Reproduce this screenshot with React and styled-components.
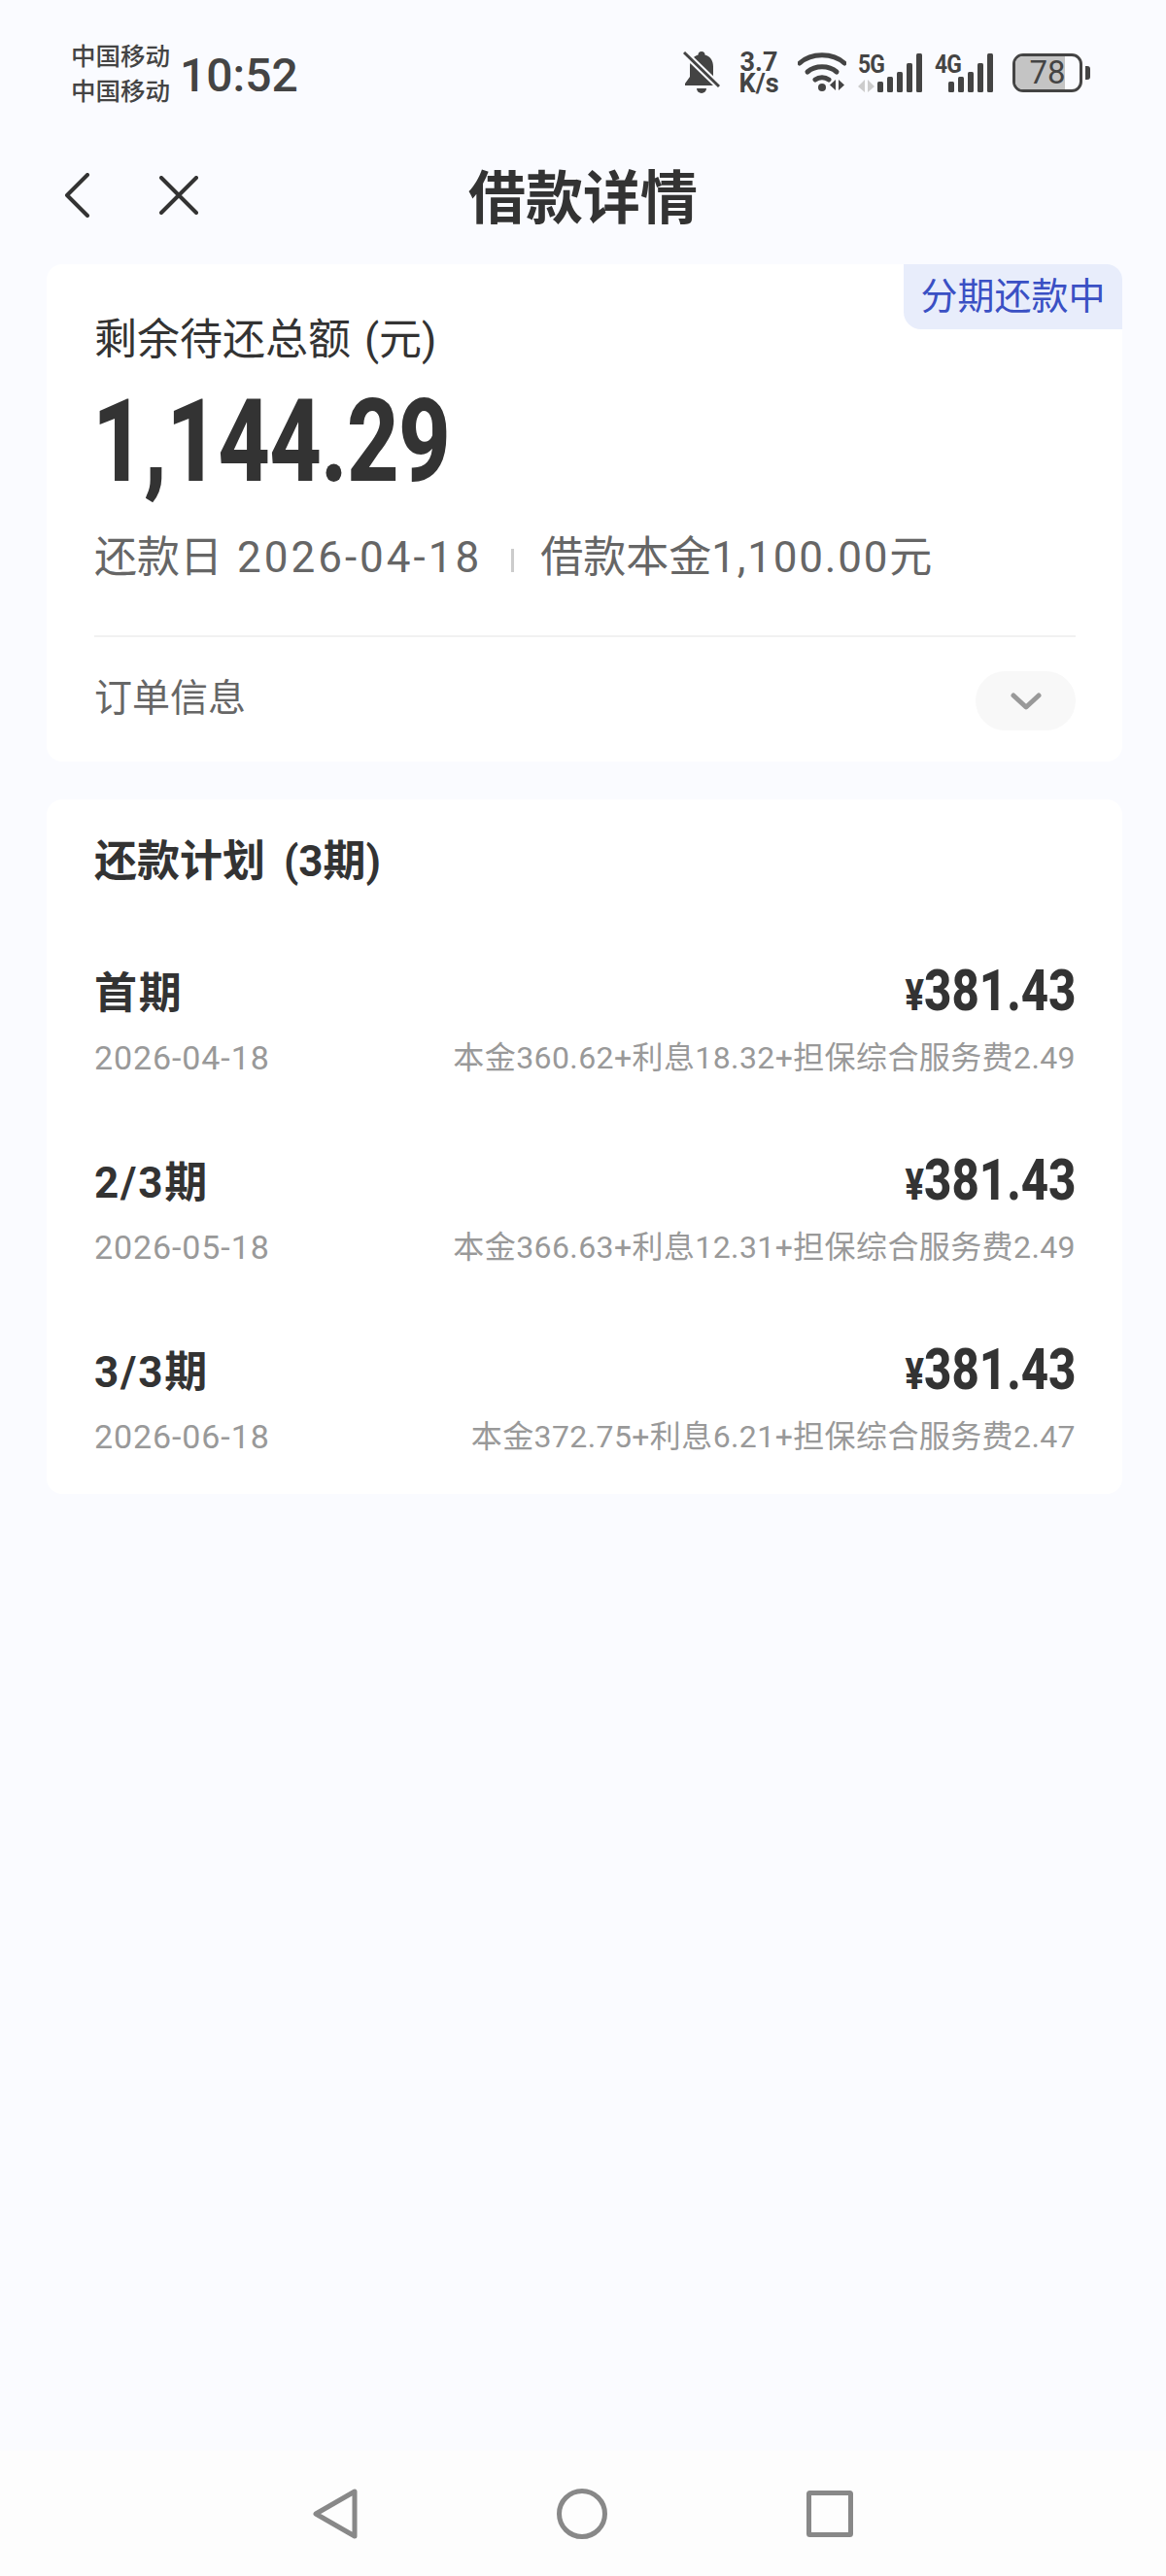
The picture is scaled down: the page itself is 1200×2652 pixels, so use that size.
import React from 'react';
import styled, { createGlobalStyle } from 'styled-components';

const plans = [
  { name: '首期', date: '2026-04-18', amount: '381.43', detail: '本金360.62+利息18.32+担保综合服务费2.49' },
  { name: '2/3期', date: '2026-05-18', amount: '381.43', detail: '本金366.63+利息12.31+担保综合服务费2.49' },
  { name: '3/3期', date: '2026-06-18', amount: '381.43', detail: '本金372.75+利息6.21+担保综合服务费2.47' },
];

const SignalBars = () => (
  <svg width="47" height="40" viewBox="0 0 47 40" fill="#444">
    <rect x="0" y="29" width="6" height="11" rx="1.5" />
    <rect x="10" y="24" width="6" height="16" rx="1.5" />
    <rect x="20" y="19" width="6" height="21" rx="1.5" />
    <rect x="30" y="10" width="6" height="30" rx="1.5" />
    <rect x="40" y="0" width="6" height="40" rx="1.5" />
  </svg>
);

const App = () => {
  return (
    <Page>
      <GlobalStyle />
      <StatusBar>
        <Carrier>
          <span>中国移动</span>
          <span>中国移动</span>
        </Carrier>
        <Clock>10:52</Clock>
        <StatusIcons>
          <svg width="38" height="44" viewBox="0 0 38 44" fill="#444">
            <path d="M19 0a3.500 3.500 0 0 1 3.500 3.500c6 1.500 8.500 6.500 8.500 12v10l5 7v2.500H2V33l5-7V15.500c0-5.500 3-10.500 8.500-12A3.500 3.500 0 0 1 19 0z" />
            <path d="M14 38h10a5 5 0 0 1-10 0z" />
            <path d="M1 1l36 35" stroke="#fafbff" strokeWidth="7" />
            <path d="M1 1l36 35" stroke="#444" strokeWidth="3" />
          </svg>
          <Speed>
            <span>3.7</span>
            <span>K/s</span>
          </Speed>
          <svg width="50" height="42" viewBox="0 0 50 42" fill="none" stroke="#444" strokeLinecap="round">
            <path d="M2 11C14 0 36 0 48 11" strokeWidth="5" />
            <path d="M10 20c8-7 22-7 30 0" strokeWidth="5" />
            <path d="M18 28c4-3 10-3 14 0" strokeWidth="5" />
            <circle cx="25" cy="36" r="4" fill="#444" stroke="none" />
            <path d="M39 28v11l-6-5.500zM42 28v11l6-5.500z" fill="#444" stroke="none" />
          </svg>
          <NetworkGroup>
            <Network $width={67}>
              <NetworkLabel>5G</NetworkLabel>
              <NetworkArrows width="17" height="13" viewBox="0 0 17 13" fill="#ccc">
                <path d="M7 0v13L0 7zM10 0v13l7-6z" />
              </NetworkArrows>
              <SignalBars />
            </Network>
            <Network $width={61}>
              <NetworkLabel>4G</NetworkLabel>
              <SignalBars />
            </Network>
          </NetworkGroup>
          <Battery>
            <BatteryBody>
              <BatteryFill />
              <BatteryText>78</BatteryText>
            </BatteryBody>
            <BatteryNub />
          </Battery>
        </StatusIcons>
      </StatusBar>

      <NavBar>
        <NavIcons>
          <svg width="26" height="46" viewBox="0 0 26 46" fill="none" stroke="#333" strokeWidth="4" strokeLinecap="round" strokeLinejoin="round">
            <path d="M24 2L3 23l21 21" />
          </svg>
          <svg width="40" height="40" viewBox="0 0 40 40" fill="none" stroke="#333" strokeWidth="4" strokeLinecap="round">
            <path d="M2 2l36 36M38 2L2 38" />
          </svg>
        </NavIcons>
        <Title>借款详情</Title>
      </NavBar>

      <Card>
        <Badge>分期还款中</Badge>
        <SummaryLabel>剩余待还总额 (元)</SummaryLabel>
        <Total>1,144.29</Total>
        <SummaryLine>
          <span>还款日<DateValue>2026-04-18</DateValue></span>
          <LineDivider />
          <span>借款本金<MoneyValue>1,100.00</MoneyValue>元</span>
        </SummaryLine>
        <OrderRow>
          <OrderLabel>订单信息</OrderLabel>
          <ExpandButton>
            <svg width="32" height="18" viewBox="0 0 32 18" fill="none" stroke="#999" strokeWidth="5" strokeLinecap="round" strokeLinejoin="round">
              <path d="M3 3l13 12L29 3" />
            </svg>
          </ExpandButton>
        </OrderRow>
      </Card>

      <PlanCard>
        <PlanTitle>还款计划 (3期)</PlanTitle>
        {plans.map((plan) => (
          <PlanRow key={plan.date}>
            <PlanTop>
              <PlanName>{plan.name}</PlanName>
              <PlanAmount><small>¥</small>{plan.amount}</PlanAmount>
            </PlanTop>
            <PlanBottom>
              <PlanDate>{plan.date}</PlanDate>
              <PlanDetail>{plan.detail}</PlanDetail>
            </PlanBottom>
          </PlanRow>
        ))}
      </PlanCard>

      <BottomNav>
        <svg width="46" height="52" viewBox="0 0 46 52" fill="none" stroke="#888" strokeWidth="5" strokeLinejoin="round">
          <path d="M43 3v46L3 26z" />
        </svg>
        <svg width="52" height="52" viewBox="0 0 52 52" fill="none" stroke="#888" strokeWidth="5">
          <circle cx="26" cy="26" r="23.500" />
        </svg>
        <svg width="48" height="48" viewBox="0 0 48 48" fill="none" stroke="#888" strokeWidth="5" strokeLinejoin="round">
          <rect x="2.500" y="2.500" width="43" height="43" rx="1" />
        </svg>
      </BottomNav>
    </Page>
  );
};

export default App;

const GlobalStyle = createGlobalStyle`
  html, body {
    margin: 0;
    padding: 0;
    background: #fafbff;
  }
  * {
    box-sizing: border-box;
  }
`;

const sans = `Roboto, "Noto Sans CJK SC", sans-serif`;

const Page = styled.div`
  position: relative;
  width: 1200px;
  height: 2652px;
  background: #fafbff;
  font-family: ${sans};
  color: #333;
  overflow: hidden;
`;

const StatusBar = styled.div`
  display: flex;
  align-items: center;
  height: 149px;
  padding: 0 78px 0 73px;
`;

const Carrier = styled.div`
  display: flex;
  flex-direction: column;
  gap: 10px;
  margin-top: 3px;
  font-size: 25.5px;
  line-height: 26px;
  font-weight: 500;
  color: #444;
`;

const Clock = styled.div`
  margin: 6px 0 0 10px;
  font-size: 48px;
  font-weight: 500;
  color: #444;
`;

const StatusIcons = styled.div`
  margin-left: auto;
  display: flex;
  align-items: center;
  gap: 19px;
`;

const Speed = styled.div`
  display: flex;
  flex-direction: column;
  align-items: center;
  width: 42px;
  font-size: 27px;
  line-height: 22px;
  font-weight: 700;
  color: #444;
`;

const NetworkGroup = styled.div`
  display: flex;
  gap: 12px;
  margin-left: -7px;
`;

const Network = styled.div`
  position: relative;
  width: ${(props) => props.$width}px;
  height: 40px;
  display: flex;
  justify-content: flex-end;
`;

const NetworkLabel = styled.span`
  position: absolute;
  left: 0;
  top: -3px;
  font-size: 26px;
  line-height: 28px;
  font-weight: 700;
  letter-spacing: -1px;
  color: #444;
  transform: scaleX(0.88);
  transform-origin: left center;
`;

const NetworkArrows = styled.svg`
  position: absolute;
  left: 0;
  bottom: 0;
`;

const Battery = styled.div`
  display: flex;
  align-items: center;
  gap: 3px;
`;

const BatteryBody = styled.div`
  position: relative;
  width: 72px;
  height: 40px;
  border: 3.500px solid #444;
  border-radius: 11px;
  overflow: hidden;
  display: flex;
  align-items: center;
  justify-content: center;
`;

const BatteryFill = styled.div`
  position: absolute;
  left: 0;
  top: 0;
  bottom: 0;
  width: 77%;
  background: #c4c4c4;
`;

const BatteryText = styled.span`
  position: relative;
  font-size: 33px;
  color: #444;
`;

const BatteryNub = styled.div`
  width: 5px;
  height: 14px;
  border-radius: 0 3px 3px 0;
  background: #444;
`;

const NavBar = styled.div`
  position: relative;
  height: 100px;
  display: flex;
  align-items: center;
  justify-content: center;
`;

const NavIcons = styled.div`
  position: absolute;
  left: 66px;
  top: 29px;
  display: flex;
  align-items: center;
  gap: 72px;
`;

const Title = styled.h1`
  margin: 0;
  font-size: 59px;
  font-weight: 700;
  color: #333;
`;

const Card = styled.section`
  position: relative;
  width: 1107px;
  margin: 23px 0 0 48px;
  padding: 50px 48px 32px 49px;
  background: #fff;
  border-radius: 16px;
`;

const Badge = styled.div`
  position: absolute;
  top: 0;
  right: 0;
  width: 225px;
  height: 67px;
  padding-bottom: 8px;
  display: flex;
  align-items: center;
  justify-content: center;
  background: #e8edfb;
  border-radius: 0 16px 0 18px;
  color: #3a50c4;
  font-size: 38px;
`;

const SummaryLabel = styled.div`
  font-size: 44px;
  line-height: 56px;
  word-spacing: 3px;
  color: #333;
`;

const Total = styled.div`
  margin: 18px 0 0 -2px;
  font-size: 118px;
  line-height: 118px;
  font-weight: 800;
  letter-spacing: -1px;
  color: #333;
  transform: scaleX(0.79);
  transform-origin: left center;
`;

const SummaryLine = styled.div`
  display: flex;
  align-items: center;
  margin-top: 32px;
  font-size: 44px;
  line-height: 56px;
  color: #666;
`;

const DateValue = styled.span`
  margin-left: 15px;
  letter-spacing: 3px;
`;

const MoneyValue = styled.span`
  letter-spacing: 1.8px;
`;

const LineDivider = styled.i`
  width: 3px;
  height: 24px;
  margin: 6px 27px 0 30px;
  background: #ccc;
`;

const OrderRow = styled.div`
  display: flex;
  align-items: flex-start;
  justify-content: space-between;
  margin-top: 52px;
  padding-top: 35px;
  border-top: 2px solid #f1f1f1;
`;

const OrderLabel = styled.div`
  margin-top: 2px;
  font-size: 39px;
  line-height: 52px;
  color: #666;
`;

const ExpandButton = styled.div`
  width: 103px;
  height: 61px;
  display: flex;
  align-items: center;
  justify-content: center;
  border-radius: 31px;
  background: #f8f8f8;
`;

const PlanCard = styled.section`
  width: 1107px;
  margin: 39px 0 0 48px;
  padding: 36px 48px 36px 49px;
  background: #fff;
  border-radius: 16px;
`;

const PlanTitle = styled.div`
  margin-bottom: 2px;
  font-size: 44px;
  line-height: 56px;
  font-weight: 700;
  word-spacing: 8px;
  color: #333;
`;

const PlanRow = styled.div`
  padding-top: 70px;
`;

const PlanTop = styled.div`
  display: flex;
  align-items: center;
  justify-content: space-between;
  height: 64px;
`;

const PlanName = styled.div`
  font-size: 44px;
  font-weight: 700;
  letter-spacing: 1.8px;
  color: #333;
`;

const PlanAmount = styled.div`
  font-size: 60px;
  font-weight: 800;
  color: #333;
  transform: scaleX(0.82);
  transform-origin: right center;
  small {
    font-size: 44px;
  }
`;

const PlanBottom = styled.div`
  display: flex;
  justify-content: space-between;
  margin-top: 15px;
  line-height: 46px;
  color: #999;
`;

const PlanDate = styled.span`
  font-size: 34px;
  letter-spacing: 0.9px;
`;

const PlanDetail = styled.span`
  font-size: 32px;
  letter-spacing: 0.4px;
`;

const BottomNav = styled.nav`
  position: absolute;
  left: 0;
  right: 0;
  bottom: 0;
  height: 129px;
  display: flex;
  align-items: center;
  justify-content: center;
  gap: 205px;
  background: #fdfdfd;
`;
